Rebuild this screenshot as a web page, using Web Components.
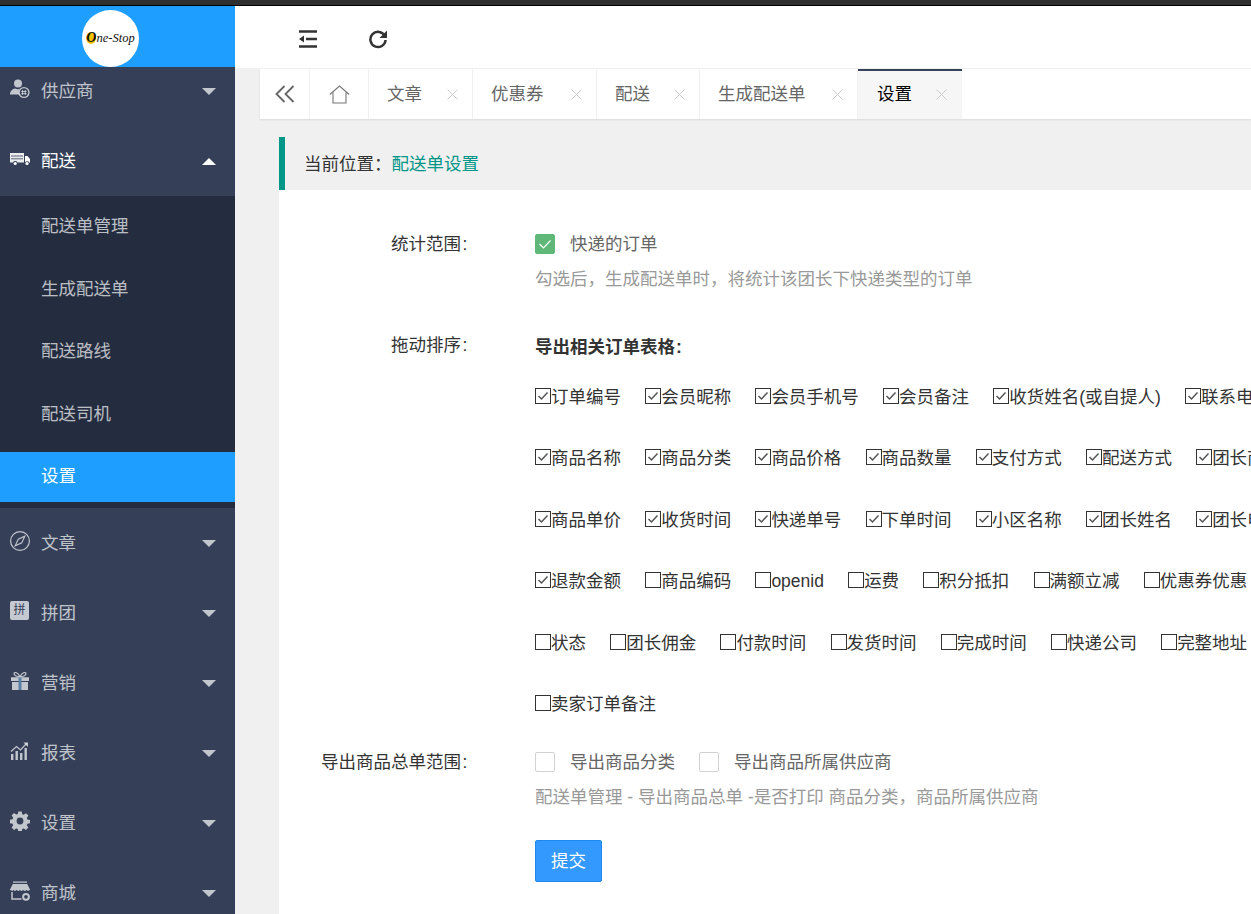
<!DOCTYPE html>
<html lang="zh">
<head>
<meta charset="utf-8">
<title>配送单设置</title>
<style>
  html, body { margin: 0; height: 100%; overflow: hidden; }
  body { font: 17.5px/24px "Liberation Sans", "Noto Sans CJK SC", sans-serif; color: #333; }
</style>
</head>
<body>
<app-shell>
  <side-nav slot="side">
    <nav-group icon="supplier">供应商</nav-group>
    <nav-group icon="truck" open>配送
      <nav-sub slot="sub">配送单管理</nav-sub>
      <nav-sub slot="sub">生成配送单</nav-sub>
      <nav-sub slot="sub">配送路线</nav-sub>
      <nav-sub slot="sub">配送司机</nav-sub>
      <nav-sub slot="sub" active>设置</nav-sub>
    </nav-group>
    <nav-group icon="compass">文章</nav-group>
    <nav-group icon="pin">拼团</nav-group>
    <nav-group icon="gift">营销</nav-group>
    <nav-group icon="chart">报表</nav-group>
    <nav-group icon="gear">设置</nav-group>
    <nav-group icon="store">商城</nav-group>
  </side-nav>

  <top-bar slot="top"></top-bar>

  <tab-strip slot="tabs">
    <tab-item style="width:104px">文章</tab-item>
    <tab-item style="width:124px">优惠券</tab-item>
    <tab-item style="width:103px">配送</tab-item>
    <tab-item style="width:158px">生成配送单</tab-item>
    <tab-item style="width:104px" active>设置</tab-item>
  </tab-strip>

  <crumb-bar>配送单设置</crumb-bar>

  <settings-card>
    <form-row label="统计范围">
      <skin-check checked>快递的订单</skin-check>
      <help-text>勾选后，生成配送单时，将统计该团长下快递类型的订单</help-text>
    </form-row>

    <form-row label="拖动排序" style="margin-top:44px">
      <strong style="display:block;font-weight:700">导出相关订单表格<span style="display:inline-block;width:8px;text-align:center">:</span></strong>
      <field-row style="margin-top:7px">
        <order-field checked>订单编号</order-field><order-field checked>会员昵称</order-field><order-field checked>会员手机号</order-field><order-field checked>会员备注</order-field><order-field checked>收货姓名(或自提人)</order-field><order-field checked>联系电话</order-field>
      </field-row>
      <field-row>
        <order-field checked>商品名称</order-field><order-field checked>商品分类</order-field><order-field checked>商品价格</order-field><order-field checked>商品数量</order-field><order-field checked>支付方式</order-field><order-field checked>配送方式</order-field><order-field checked>团长商品</order-field>
      </field-row>
      <field-row>
        <order-field checked>商品单价</order-field><order-field checked>收货时间</order-field><order-field checked>快递单号</order-field><order-field checked>下单时间</order-field><order-field checked>小区名称</order-field><order-field checked>团长姓名</order-field><order-field checked>团长电话</order-field>
      </field-row>
      <field-row>
        <order-field checked>退款金额</order-field><order-field>商品编码</order-field><order-field>openid</order-field><order-field>运费</order-field><order-field>积分抵扣</order-field><order-field>满额立减</order-field><order-field>优惠券优惠</order-field>
      </field-row>
      <field-row>
        <order-field>状态</order-field><order-field>团长佣金</order-field><order-field>付款时间</order-field><order-field>发货时间</order-field><order-field>完成时间</order-field><order-field>快递公司</order-field><order-field>完整地址</order-field>
      </field-row>
      <field-row>
        <order-field>卖家订单备注</order-field>
      </field-row>
    </form-row>

    <form-row label="导出商品总单范围" style="margin-top:17px">
      <div style="display:flex;gap:24px">
        <skin-check>导出商品分类</skin-check>
        <skin-check>导出商品所属供应商</skin-check>
      </div>
      <help-text>配送单管理 - 导出商品总单 -是否打印 商品分类，商品所属供应商</help-text>
      <submit-button>提交</submit-button>
    </form-row>
  </settings-card>
</app-shell>

<script>
// icons for the side menu, all on a 20x20 box
const ICONS = {
  supplier: `<circle cx="8" cy="4.6" r="4" /><path d="M0 15.5c0-3.6 3-5.6 5-6 1.8.8 3 .8 4.4.3-.9 1.4-1 3.8.2 5.7z"/><circle cx="14" cy="13.5" r="5.6"/><circle cx="14" cy="13.5" r="4.2" fill="#354058"/><path d="M12.6 11v5M15.2 11v5M11.2 12.5h5.4M11.2 14.6h5.4" stroke="currentColor" stroke-width=".9" fill="none"/>`,
  truck: `<path d="M0 4h14v9.500H7.500a2.500 2.500 0 0 0-4.500 0H0z" opacity=".9"/><path d="M15 7h2.500L20 10v3.500h-.8a2.500 2.500 0 0 0-4.200-.2z"/><circle cx="5.200" cy="14.500" r="1.600"/><circle cx="17" cy="14.500" r="1.600"/><path d="M1 7h12M1 9.800h12" stroke="#354058" stroke-width=".8"/>`,
  compass: `<circle cx="10" cy="10" r="9.400" fill="none" stroke="currentColor" stroke-width="1.200"/><path d="M14.800 5.200 11.800 11.800 5.200 14.800 8.200 8.200z" fill="none" stroke="currentColor" stroke-width="1.100"/>`,
  gift: `<path d="M1 6.200h18V10H1zM2 11h16v8H2z"/><path d="M10 6V19" stroke="#5a7fa6" stroke-width="3"/><path d="M10 5.800C8 1.500 4.500.6 4 2.400c-.4 1.700 2.500 3.200 6 3.400zm0 0c2-4.300 5.500-5.200 6-3.400.4 1.700-2.500 3.200-6 3.400z" fill="none" stroke="currentColor" stroke-width="1.200"/>`,
  chart: `<path d="M1 13h2.400v6H1zM5.500 10h2.400v9H5.500zM10 12h2.400v7H10zM14.500 7h2.400v12h-2.400z"/><path d="M1 10.500 6.500 5.500l4 3.500L16.500 2.500" fill="none" stroke="currentColor" stroke-width="1.200"/><path d="M13.500 1.500h4.500V6z"/>`,
  gear: `<path fill-rule="evenodd" d="M8.300.5h3.400l.5 2.700 1.500.6 2.300-1.600 2.400 2.400-1.600 2.300.6 1.500 2.700.5v3.400l-2.700.5-.6 1.500 1.600 2.300-2.400 2.400-2.300-1.600-1.500.6-.5 2.700H8.300l-.5-2.700-1.500-.6-2.300 1.600-2.400-2.400 1.600-2.300-.6-1.500-2.700-.5V8.700l2.700-.5.6-1.500L1.600 4.400 4 2l2.300 1.600 1.500-.6zM10 6.600a3.400 3.400 0 1 0 0 6.800 3.400 3.400 0 0 0 0-6.800z"/>`,
  store: `<path d="M3 .5h14v1.300H3zM2.800 3h14.400L20 8.600c0 1.300-3 1.700-3.400.2-.5 1.500-3 1.500-3.300 0-.5 1.500-2.900 1.500-3.300 0-.4 1.500-2.800 1.500-3.300 0-.4 1.500-3.300 1.500-3.300 0-.4 1.500-3.400 1.100-3.400-.2z"/><path d="M2 11v7h9.500" fill="none" stroke="currentColor" stroke-width="1.500"/><circle cx="16" cy="15.800" r="2.900" fill="none" stroke="currentColor" stroke-width="2"/>`
};

function shadow(el, html) {
  el.attachShadow({mode: 'open'}).innerHTML = html;
}

class AppShell extends HTMLElement {
  constructor() {
    super();
    shadow(this, `
      <style>
        :host { display: flex; flex-direction: column; width: 1251px; height: 914px; overflow: hidden; background: #f0f0f0; }
        .strip { height: 5px; background: #2f2f2f; border-bottom: 1px solid #000; flex: none; }
        .body { display: flex; flex: 1; min-height: 0; }
        .main { flex: 1; min-width: 0; display: flex; flex-direction: column; }
        .tabs { padding: 1px 0 0 25px; }
        .page { padding: 18px 0 0 44px; display: flex; flex-direction: column; flex: 1; min-height: 0; }
      </style>
      <div class="strip"></div>
      <div class="body">
        <slot name="side"></slot>
        <div class="main">
          <slot name="top"></slot>
          <div class="tabs"><slot name="tabs"></slot></div>
          <div class="page"><slot></slot></div>
        </div>
      </div>`);
  }
}

class SideNav extends HTMLElement {
  constructor() {
    super();
    shadow(this, `
      <style>
        :host { display: flex; flex-direction: column; width: 235px; flex: none; background: #354058; }
        .logo { height: 57px; padding: 4px 14px 0 0; background: #1e9fff; flex: none; overflow: hidden; display: flex; justify-content: center; }
        .disc { width: 57px; height: 57px; border-radius: 50%; background: #fff; color: #111; text-align: center;
          font: italic 12.5px/57px "Liberation Serif", serif; white-space: nowrap; }
        .disc b { color: #111; background: #f4c400; border-radius: 50%; font-size: 14px; font-weight: 700; line-height: 12px; display: inline-block; }
        .menu { flex: 1; min-height: 0; overflow: hidden; }
        ::slotted(:first-child) { margin-top: -11px; }
      </style>
      <div class="logo"><div class="disc"><b>O</b>ne-Stop</div></div>
      <div class="menu"><slot></slot></div>`);
  }
}

class NavGroup extends HTMLElement {
  constructor() {
    super();
    const open = this.hasAttribute('open');
    const name = this.getAttribute('icon');
    const art = name === 'pin'
      ? `<span class="pin">拼</span>`
      : `<svg width="20" height="20" viewBox="0 0 20 20" fill="currentColor">${ICONS[name]}</svg>`;
    shadow(this, `
      <style>
        :host { display: block; }
        .row { height: 70px; display: flex; align-items: center; padding-left: 10px; padding-right: 19px;
          color: ${open ? '#fff' : 'rgba(255,255,255,.7)'}; }
        .icon { width: 20px; height: 20px; margin-top: -4px; margin-right: 11px; flex: none; display: flex; }
        .text { flex: 1; }
        .pin { width: 19px; height: 19px; border-radius: 2px; background: #c4c9d2; color: #354058; font-size: 12px; line-height: 18px; text-align: center; }
        .caret { width: 0; height: 0; border: 7px solid transparent; margin-top: ${open ? '-7px' : '7px'};
          ${open ? 'border-bottom-color:#fff' : 'border-top-color:rgba(255,255,255,.7)'}; }
        .sub { background: #242d40; padding: 6px 0 6px; }
      </style>
      <div class="row"><span class="icon">${art}</span><span class="text"><slot></slot></span><span class="caret"></span></div>
      ${open ? '<div class="sub"><slot name="sub"></slot></div>' : ''}`);
  }
}

class NavSub extends HTMLElement {
  constructor() {
    super();
    shadow(this, `
      <style>
        :host { display: block; height: 50px; line-height: 49px; padding-left: 41px; color: rgba(255,255,255,.7); margin-bottom: 12.500px; }
        :host(:last-child) { margin-bottom: 0; }
        :host([active]) { background: #1e9fff; color: #fff; }
      </style>
      <slot></slot>`);
  }
}

class TopBar extends HTMLElement {
  constructor() {
    super();
    shadow(this, `
      <style>
        :host { display: flex; align-items: center; height: 62px; box-sizing: border-box; padding: 3px 0 0 63px; background: #fff; gap: 50px; flex: none; color: #333; }
        svg { display: block; }
      </style>
      <svg width="20" height="18" viewBox="0 0 20 18"><path d="M1 1.500h18M8 9h11M1 16.500h18" stroke="currentColor" stroke-width="2.400"/><path d="M1 9l5-3.500v7z" fill="currentColor"/></svg>
      <svg width="20" height="20" viewBox="0 0 20 20"><path d="M16.800 7A7.600 7.600 0 1 0 17.600 11" fill="none" stroke="currentColor" stroke-width="2.500"/><path d="M19 1.500v7.500h-7.500z" fill="currentColor"/></svg>`);
  }
}

class TabStrip extends HTMLElement {
  constructor() {
    super();
    shadow(this, `
      <style>
        :host { display: flex; height: 50px; background: #fff; box-shadow: 0 1px 2px rgba(0,0,0,.1); color: #666; }
        .cell { display: flex; align-items: center; justify-content: center; border-right: 1px solid #f0f0f0; flex: none; }
        .back { width: 49px; } .home { width: 58px; }
      </style>
      <div class="cell back"><svg width="20" height="18" viewBox="0 0 20 18" fill="none" stroke="#666" stroke-width="1.800"><path d="M9.500 1 1.500 9l8 8M18.500 1l-8 8 8 8"/></svg></div>
      <div class="cell home"><svg width="21" height="19" viewBox="0 0 21 19" fill="none" stroke="#777" stroke-width="1.100"><path d="M.8 9.500 10.500 1l9.700 8.500M4 7.500V18h13V7.500"/></svg></div>
      <slot></slot>`);
  }
}

class TabItem extends HTMLElement {
  constructor() {
    super();
    shadow(this, `
      <style>
        :host { display: flex; align-items: center; flex: none; height: 50px; box-sizing: border-box; padding: 0 14px 0 18px; border-right: 1px solid #f0f0f0; color: #666; }
        :host([active]) { background: #f6f6f6; color: #000; border-right: 0; border-top: 2px solid #36415a; padding: 0 15px 2px 19px; }
        svg { margin-left: auto; display: block; }
      </style>
      <slot></slot>
      <svg width="11" height="11" viewBox="0 0 11 11" stroke="#ccc" stroke-width="1"><path d="M.5.500l10 10M10.500.500l-10 10"/></svg>`);
  }
}

class CrumbBar extends HTMLElement {
  constructor() {
    super();
    shadow(this, `
      <style>
        :host { display: block; height: 53px; line-height: 55px; box-sizing: border-box; border-left: 6px solid #009688; padding-left: 19px; color: #333; flex: none; overflow: hidden; }
        span { color: #009688; }
      </style>
      当前位置：<span><slot></slot></span>`);
  }
}

class SettingsCard extends HTMLElement {
  constructor() {
    super();
    shadow(this, `
      <style>:host { display: block; background: #fff; padding-top: 44px; flex: 1; overflow: hidden; }</style>
      <slot></slot>`);
  }
}

class FormRow extends HTMLElement {
  constructor() {
    super();
    shadow(this, `
      <style>
        :host { display: grid; grid-template-columns: 190px 1fr; column-gap: 66px; }
        .label { text-align: right; color: #333; line-height: 21px; white-space: nowrap; }
        .colon { display: inline-block; width: 8px; text-align: center; }
        .field { min-width: 0; }
      </style>
      <div class="label">${this.getAttribute('label')}<span class="colon">:</span></div>
      <div class="field"><slot></slot></div>`);
  }
}

class SkinCheck extends HTMLElement {
  constructor() {
    super();
    shadow(this, `
      <style>
        :host { display: flex; align-items: center; height: 20px; color: #666; white-space: nowrap; }
        .box { width: 20px; height: 20px; box-sizing: border-box; border: 1px solid #d2d2d2; border-radius: 2px; background: #fff; margin-right: 15px; flex: none; }
        :host([checked]) .box { background: #5fb878; border-color: #5fb878; }
        svg { display: none; }
        :host([checked]) svg { display: block; }
      </style>
      <span class="box"><svg width="18" height="18" viewBox="0 0 18 18" fill="none" stroke="#fff" stroke-width="1.200"><path d="M3.500 9l4 4 7-7.500"/></svg></span>
      <slot></slot>`);
  }
}

class HelpText extends HTMLElement {
  constructor() {
    super();
    shadow(this, `
      <style>:host { display: block; color: #999; line-height: 24px; margin-top: 13px; white-space: nowrap; }</style>
      <slot></slot>`);
  }
}

class FieldRow extends HTMLElement {
  constructor() {
    super();
    shadow(this, `
      <style>:host { display: flex; height: 61.500px; align-items: center; gap: 24.200px; white-space: nowrap; overflow: hidden; }</style>
      <slot></slot>`);
  }
}

class OrderField extends HTMLElement {
  constructor() {
    super();
    shadow(this, `
      <style>
        :host { display: inline-flex; align-items: center; flex: none; color: #333; line-height: 24px; }
        .box { width: 16px; height: 16px; box-sizing: border-box; border: 1px solid #333; background: #fff; margin-top: -2px; flex: none; }
        svg { display: none; }
        :host([checked]) svg { display: block; }
      </style>
      <span class="box"><svg width="14" height="14" viewBox="0 0 14 14" fill="none" stroke="#555" stroke-width="1.500"><path d="M2.500 7l3 3 6-6.500"/></svg></span>
      <slot></slot>`);
  }
}

class SubmitButton extends HTMLElement {
  constructor() {
    super();
    shadow(this, `
      <style>
        :host { display: block; margin-top: 31px; width: 67px; height: 42px; line-height: 40px; box-sizing: border-box; text-align: center;
          background: #3399ff; border: 1px solid #1e87f0; border-radius: 2px; color: #fff; }
      </style>
      <slot></slot>`);
  }
}

customElements.define('app-shell', AppShell);
customElements.define('side-nav', SideNav);
customElements.define('nav-group', NavGroup);
customElements.define('nav-sub', NavSub);
customElements.define('top-bar', TopBar);
customElements.define('tab-strip', TabStrip);
customElements.define('tab-item', TabItem);
customElements.define('crumb-bar', CrumbBar);
customElements.define('settings-card', SettingsCard);
customElements.define('form-row', FormRow);
customElements.define('skin-check', SkinCheck);
customElements.define('help-text', HelpText);
customElements.define('field-row', FieldRow);
customElements.define('order-field', OrderField);
customElements.define('submit-button', SubmitButton);
</script>
</body>
</html>
